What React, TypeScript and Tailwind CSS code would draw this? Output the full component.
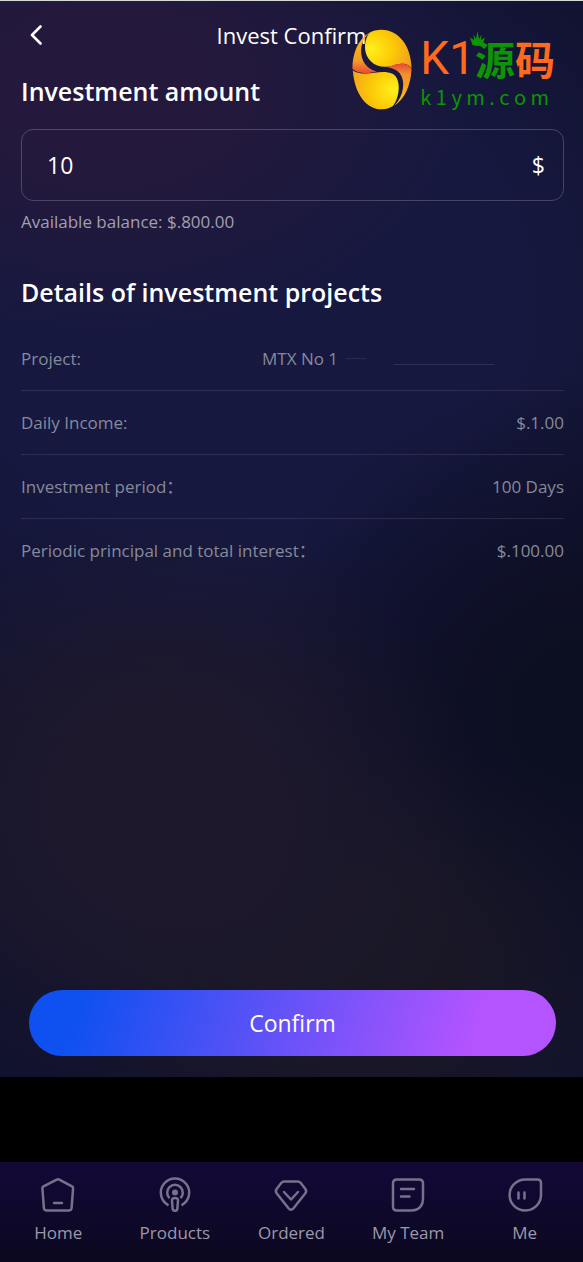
import { useState } from "react";
import type { ReactNode } from "react";

const details = [
  { label: "Daily Income:", value: "$.1.00" },
  { label: "Investment period：", value: "100 Days" },
  { label: "Periodic principal and total interest：", value: "$.100.00" },
];

function NavIcon({ children }: { children: ReactNode }) {
  return (
    <svg
      viewBox="0 0 36 36"
      className="size-9 text-[#77718b]"
      fill="none"
      stroke="currentColor"
      strokeWidth="2.5"
      strokeLinecap="round"
      strokeLinejoin="round"
      aria-hidden="true"
    >
      {children}
    </svg>
  );
}

const tabs = [
  {
    name: "Home",
    icon: (
      <NavIcon>
        <path d="M16.7 3.6 3.500 10.400q-1.200.7-1.100 2L3.900 32q.2 2.400 2.600 2.400h22.500q2.400 0 2.600-2.400l1.500-19.600q.1-1.300-1.100-2L19.300 3.600q-1.300-.7-2.600 0Z" />
        <path d="M14 27h8" />
      </NavIcon>
    ),
  },
  {
    name: "Products",
    icon: (
      <NavIcon>
        <path d="M11.500 29.300A14.200 14.200 0 1 1 24.500 29.300" strokeLinecap="butt" />
        <path d="M12.500 22.200A7.800 7.800 0 1 1 23.500 22.200" strokeLinecap="butt" />
        <circle cx="18" cy="16.500" r="1.800" fill="currentColor" />
        <path d="M15 24.300q0-2.300 3-2.300t3 2.300l-.6 8q-.3 2.500-2.400 2.500t-2.400-2.500Z" />
      </NavIcon>
    ),
  },
  {
    name: "Ordered",
    icon: (
      <NavIcon>
        <path d="M11 5.500h14q1.400 0 2.400 1.100l5 6.400q1.600 2.300-.2 4.500L20.300 32.500q-2.300 2.400-4.600 0L3.800 17.500q-1.800-2.200-.2-4.500l5-6.400Q9.600 5.500 11 5.500Z" />
        <path d="m11 16 7 7.500 7-7.500" />
      </NavIcon>
    ),
  },
  {
    name: "My Team",
    icon: (
      <NavIcon>
        <path d="M7 3.500h22q4 0 4 4V22q0 12.500-12.500 12.500H7q-4 0-4-4v-23q0-4 4-4Z" />
        <path d="M11 13h13M11 20.500h8.500" />
      </NavIcon>
    ),
  },
  {
    name: "Me",
    icon: (
      <NavIcon>
        <path d="M18 3.500h12.500q3.500 0 3.500 3.500v12A15.700 15.500 0 1 1 18 3.500Z" />
        <path d="M11.500 16.500v6M17.500 16.500v6" />
      </NavIcon>
    ),
  },
];

function SiteMark() {
  return (
    <div className="pointer-events-none absolute top-[29px] right-[28px] flex gap-2">
      <svg viewBox="38 88 180 244" className="h-[81px] w-[60px]" aria-hidden="true">
        <defs>
          <radialGradient id="upper" cx="0.12" cy="0.5" r="0.95">
            <stop offset="0" stopColor="#fff01c" />
            <stop offset="0.5" stopColor="#fccb06" />
            <stop offset="1" stopColor="#f29a22" />
          </radialGradient>
          <radialGradient id="lower" cx="0.88" cy="0.5" r="0.95">
            <stop offset="0" stopColor="#fff01c" />
            <stop offset="0.5" stopColor="#fccb06" />
            <stop offset="1" stopColor="#f5a41c" />
          </radialGradient>
          <linearGradient id="ribbonLeft" x1="0" y1="0" x2="0" y2="1">
            <stop offset="0" stopColor="#fcc40c" />
            <stop offset="0.7" stopColor="#f39a28" />
            <stop offset="1" stopColor="#e94a35" />
          </linearGradient>
          <linearGradient id="ribbonRight" x1="0" y1="0" x2="0" y2="1">
            <stop offset="0" stopColor="#e94a35" />
            <stop offset="0.25" stopColor="#f0902c" />
            <stop offset="1" stopColor="#fcc40c" />
          </linearGradient>
        </defs>
        <path d="M89 100C100 93 112 90 127 90C178 90 217 140 217 208C208 190 188 190 165 197C140 205 113 204 95 186C74 166 70 130 89 100Z" fill="url(#upper)" />
        <path d="M90 99C55 118 38 165 39 208C55 225 92 222 112 216C80 208 65 182 65 155C65 130 76 112 90 99Z" fill="url(#ribbonLeft)" />
        <path d="M217 210C214 262 195 300 165 319C195 288 199 245 182 222C173 211 158 205 145 204C172 190 208 186 217 210Z" fill="url(#ribbonRight)" />
        <path d="M40 212C45 282 80 330 127 330C140 330 152 326 161 320C184 290 185 236 160 223C132 210 100 224 75 222C58 221 45 217 40 212Z" fill="url(#lower)" />
      </svg>
      <div className="relative flex flex-col">
        <div className="flex h-[58px] items-center whitespace-nowrap">
          <span className="font-['Roboto',sans-serif] text-[46px] leading-[58px] text-[#ff6a1c]">K1</span>
          <span className="font-['Noto_Sans_CJK_SC',sans-serif] text-[40px] leading-[58px] font-bold text-[#ff6a1c]">
            <span className="text-[#0c9404]">源</span>码
          </span>
        </div>
        <span className="font-['Noto_Sans_CJK_SC',sans-serif] text-[20px] leading-[20px] whitespace-nowrap text-[#0c9404]">
          k 1 y m . c o m
        </span>
        <svg viewBox="0 0 15 16" className="absolute top-[2px] left-[50px] h-4 w-[15px] fill-[#0c9404]" aria-hidden="true">
          <path d="M0 6.500 4 9 3.500 3.500 6 8 7.500 0 9 8l2.500-4.500L11 9l4-2.500L12.500 14q-5 2-10 0Z" />
        </svg>
      </div>
    </div>
  );
}

export default function App() {
  const [amount, setAmount] = useState("10");

  return (
    <div className="relative flex min-h-screen flex-col bg-black font-['Open_Sans','Noto_Sans_CJK_SC',sans-serif] text-white">
      <div className="flex flex-1 flex-col border-t border-[#d5dad6] bg-[#11122e] bg-[radial-gradient(ellipse_55%_28%_at_28%_75%,#1d182c_35%,transparent_100%),radial-gradient(ellipse_50%_22%_at_62%_90%,#191726_35%,transparent_100%),radial-gradient(ellipse_65%_24%_at_18%_8%,#24193c_30%,transparent_100%),radial-gradient(ellipse_60%_32%_at_100%_66%,#0c0e22_20%,transparent_100%),radial-gradient(ellipse_90%_45%_at_42%_28%,#161840_50%,transparent_100%)]">
        <header className="grid h-[68px] grid-cols-[72px_1fr_72px] items-center">
          <button type="button" aria-label="Back" className="flex h-full items-center pl-[30px]">
            <svg viewBox="0 0 12 20" className="h-5 w-3" fill="none" stroke="currentColor" strokeWidth="2.600" strokeLinecap="round" strokeLinejoin="round">
              <path d="M10.500 1.500 2 10l8.500 8.500" />
            </svg>
          </button>
          <h1 className="text-center text-[22px] leading-8">Invest Confirm</h1>
        </header>

        <main className="flex flex-1 flex-col pr-[19px] pb-[21px] pl-[21px]">
          <label htmlFor="amount" className="pt-1 text-[25px] leading-9 font-semibold">
            Investment amount
          </label>
          <div className="mt-5 flex h-[72px] items-center rounded-xl border border-white/20 pr-[18px] pl-[25px] text-[23px]">
            <input
              id="amount"
              type="text"
              inputMode="decimal"
              value={amount}
              onChange={(e) => setAmount(e.target.value)}
              className="min-w-0 flex-1 bg-transparent outline-none"
            />
            <span>$</span>
          </div>
          <p className="mt-[9px] text-[17px] leading-6 text-[#a29fb0]">Available balance: $.800.00</p>

          <h2 className="mt-10 text-[25px] leading-9 font-semibold">Details of investment projects</h2>
          <dl className="mt-[17px] divide-y divide-white/10 text-[17px] leading-6 text-[#858a99]">
            <div className="flex h-16 items-center justify-between">
              <dt>Project:</dt>
              <dd className="flex w-[302px] items-center">
                MTX No 1
                <span className="ml-2 h-px w-5 bg-white/8" />
                <span className="mt-3 ml-7 h-px w-25 bg-white/10" />
              </dd>
            </div>
            {details.map((row) => (
              <div key={row.label} className="flex h-16 items-center justify-between">
                <dt>{row.label}</dt>
                <dd>{row.value}</dd>
              </div>
            ))}
          </dl>

          <div className="mt-auto px-2">
            <button
              type="button"
              className="h-[66px] w-full rounded-full bg-[linear-gradient(107deg,#0f50f0_10%,#b454ff_84%)] text-[23px]"
            >
              Confirm
            </button>
          </div>
        </main>
      </div>

      <nav className="mt-[85px] grid h-[100px] grid-cols-5 bg-linear-to-b from-[#130838] to-[#0b0820]">
        {tabs.map((tab) => (
          <a key={tab.name} href="#" className="flex flex-col items-center pt-[14px] text-[17px] text-[#9c99a9]">
            {tab.icon}
            <span className="mt-[9px] leading-6">{tab.name}</span>
          </a>
        ))}
      </nav>

      <SiteMark />
    </div>
  );
}
